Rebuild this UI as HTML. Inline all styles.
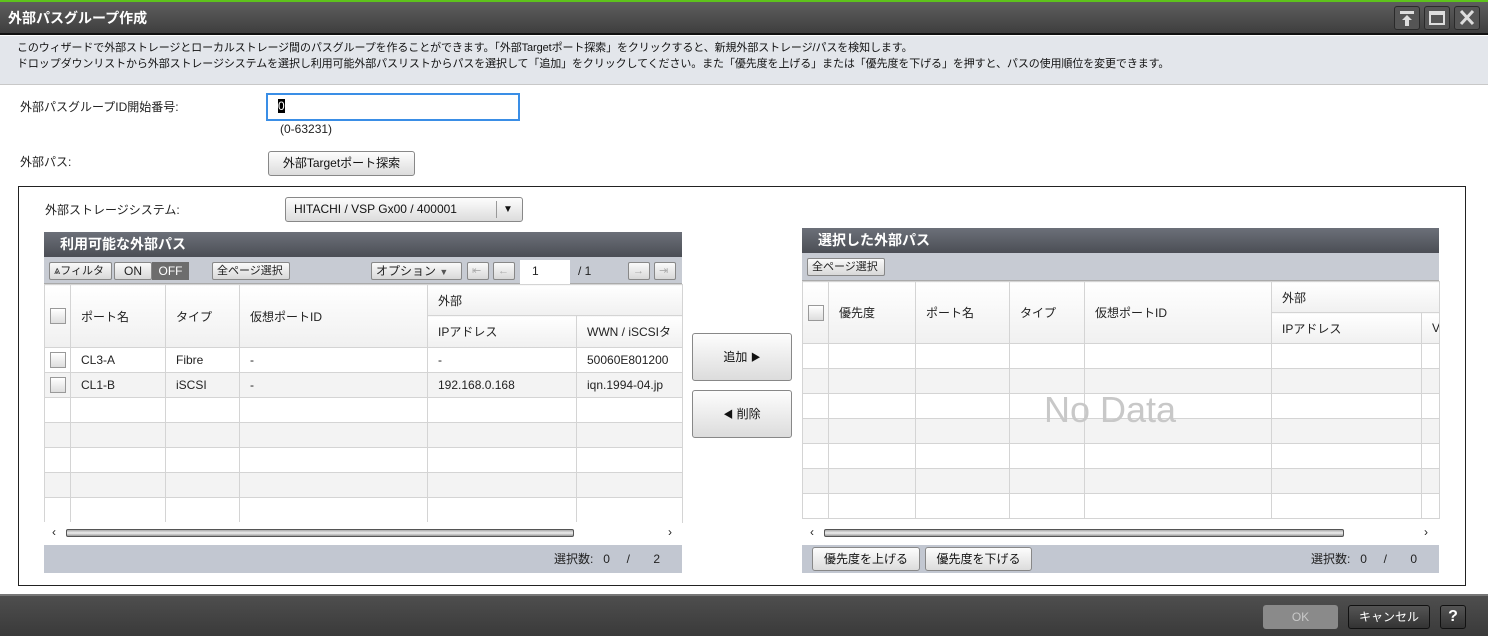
<!DOCTYPE html>
<html><head><meta charset="utf-8"><style>
*{box-sizing:border-box;margin:0;padding:0}
body{width:1488px;height:636px;overflow:hidden;background:#fff;font-family:"Liberation Sans","Noto Sans CJK JP",sans-serif;font-size:12px;color:#222;position:relative}
.a{position:absolute}
.btn{position:absolute;border:1px solid #888;border-radius:3px;background:linear-gradient(#fdfdfd,#dcdcdc);text-align:center;font-size:12px;color:#111}
.hdr{position:absolute;background:linear-gradient(#6c7079,#4b4e55);color:#fff;font-weight:bold;font-size:14px;padding-left:16px;line-height:24px}
.tb{position:absolute;background:#c7cbd3;border-bottom:1px solid #aaa}
.sb{position:absolute;border:1px solid #888;border-radius:2px;background:linear-gradient(#fafafa,#d8d8d8);font-size:11px;line-height:16px;padding:0 4px;height:18px}
table{border-collapse:collapse;table-layout:fixed;position:absolute;font-size:12px}
td{border:1px solid #d4d4d4;padding-left:10px;white-space:nowrap;overflow:hidden}
.th td{background:linear-gradient(#fff,#f0f0f0)}
tr.r td{height:25px}
tr.r:nth-child(even) td{background:#f3f3f3}
.cb{display:inline-block;width:16px;height:16px;border:1px solid #999;background:linear-gradient(#fff,#ddd);vertical-align:middle}
.foot{position:absolute;background:#c2c7d1;height:28px;line-height:28px;text-align:right;font-size:12px}
.scr{position:absolute;background:#fff;height:23px}
</style></head><body>
<div class="a" style="left:0;top:0;width:1488px;height:2px;background:#5ec31c"></div>
<div class="a" style="left:0;top:2px;width:1488px;height:33px;background:linear-gradient(#5e5e5e,#3e3e3e);border-bottom:2px solid #111"></div>
<div class="a" style="left:8px;top:8px;color:#fff;font-weight:bold;font-size:14px">外部パスグループ作成</div>
<div class="a" style="left:1394px;top:6px;width:26px;height:24px;border:1px solid #2a2a2a;border-radius:3px;background:#555"><svg width="24" height="22"><rect x="5" y="4" width="14" height="3" fill="#ddd"/><path d="M12 8 L7 13 H10 V19 H14 V13 H17Z" fill="#ddd"/></svg></div>
<div class="a" style="left:1424px;top:6px;width:26px;height:24px;border:1px solid #2a2a2a;border-radius:3px;background:#555"><svg width="24" height="22"><rect x="5" y="5" width="14" height="12" fill="none" stroke="#ddd" stroke-width="2"/><rect x="5" y="5" width="14" height="3" fill="#ddd"/></svg></div>
<div class="a" style="left:1454px;top:6px;width:26px;height:24px;border:1px solid #2a2a2a;border-radius:3px;background:#555"><svg width="24" height="22"><path d="M6 4 L18 17 M18 4 L6 17" stroke="#ddd" stroke-width="3"/></svg></div>
<div class="a" style="left:0;top:36px;width:1488px;height:49px;background:#e3e6eb;border-bottom:1px solid #c8c8c8"></div>
<div class="a" style="left:17px;top:40px;font-size:11px;line-height:16px;color:#111;letter-spacing:-0.1px">このウィザードで外部ストレージとローカルストレージ間のパスグループを作ることができます。「外部Targetポート探索」をクリックすると、新規外部ストレージ/パスを検知します。<br>ドロップダウンリストから外部ストレージシステムを選択し利用可能外部パスリストからパスを選択して「追加」をクリックしてください。また「優先度を上げる」または「優先度を下げる」を押すと、パスの使用順位を変更できます。</div>
<div class="a" style="left:20px;top:98px">外部パスグループID開始番号:</div>
<div class="a" style="left:266px;top:93px;width:254px;height:28px;border:2px solid #3a8ee6;background:#fff"><span style="position:absolute;left:10px;top:4px;background:#000;color:#fff;font-size:12px;line-height:14px">0</span></div>
<div class="a" style="left:280px;top:122px">(0-63231)</div>
<div class="a" style="left:20px;top:153px">外部パス:</div>
<div class="btn" style="left:268px;top:151px;width:147px;height:25px;line-height:23px">外部Targetポート探索</div>
<div class="a" style="left:18px;top:186px;width:1448px;height:400px;border:1px solid #222"></div>
<div class="a" style="left:45px;top:201px">外部ストレージシステム:</div>
<div class="btn" style="left:285px;top:197px;width:238px;height:25px;line-height:23px;text-align:left;padding-left:8px">HITACHI / VSP Gx00 / 400001<span style="position:absolute;left:210px;top:3px;height:17px;border-left:1px solid #999"></span><span style="position:absolute;left:217px;top:0;font-size:10px">▼</span></div>

<div class="hdr" style="left:44px;top:232px;width:638px;height:25px">利用可能な外部パス</div>
<div class="tb" style="left:44px;top:257px;width:638px;height:27px"></div>
<div class="sb" style="left:49px;top:262px;width:63px">⩓フィルタ</div>
<div class="sb" style="left:114px;top:262px;width:38px;text-align:center;font-size:12px">ON</div>
<div class="a" style="left:152px;top:262px;width:37px;height:18px;background:#6d6d6d;color:#fff;text-align:center;line-height:18px;font-size:12px">OFF</div>
<div class="sb" style="left:212px;top:262px;width:78px">全ページ選択</div>
<div class="sb" style="left:371px;top:262px;width:91px;font-size:12px">オプション <span style="font-size:9px;color:#555">▼</span></div>
<div class="sb" style="left:467px;top:262px;width:22px;color:#aaa">⇤</div>
<div class="sb" style="left:493px;top:262px;width:22px;color:#aaa">←</div>
<div class="a" style="left:520px;top:260px;width:50px;height:24px;background:#fff;padding:4px 0 0 12px">1</div>
<div class="a" style="left:578px;top:264px">/ 1</div>
<div class="sb" style="left:628px;top:262px;width:22px;color:#aaa">→</div>
<div class="sb" style="left:654px;top:262px;width:22px;color:#aaa">⇥</div>
<table style="left:44px;top:284px;width:638px">
<colgroup><col style="width:26px"><col style="width:95px"><col style="width:74px"><col style="width:188px"><col style="width:149px"><col style="width:106px"></colgroup>
<tr class="th"><td rowspan="2" style="padding-left:5px;height:63px"><span class="cb"></span></td><td rowspan="2">ポート名</td><td rowspan="2">タイプ</td><td rowspan="2">仮想ポートID</td><td colspan="2" style="height:31px">外部</td></tr>
<tr class="th"><td style="height:32px">IPアドレス</td><td>WWN / iSCSIタ</td></tr>
<tr class="r"><td style="padding-left:5px"><span class="cb"></span></td><td>CL3-A</td><td>Fibre</td><td>-</td><td>-</td><td>50060E801200</td></tr>
<tr class="r"><td style="padding-left:5px"><span class="cb"></span></td><td>CL1-B</td><td>iSCSI</td><td>-</td><td>192.168.0.168</td><td>iqn.1994-04.jp</td></tr>
<tr class="r"><td></td><td></td><td></td><td></td><td></td><td></td></tr>
<tr class="r"><td></td><td></td><td></td><td></td><td></td><td></td></tr>
<tr class="r"><td></td><td></td><td></td><td></td><td></td><td></td></tr>
<tr class="r"><td></td><td></td><td></td><td></td><td></td><td></td></tr>
<tr class="r"><td></td><td></td><td></td><td></td><td></td><td></td></tr>
</table>
<div class="scr" style="left:44px;top:522px;width:638px"><span class="a" style="left:8px;top:3px">‹</span><div class="a" style="left:22px;top:7px;width:508px;height:8px;border:1px solid #555;border-radius:2px;background:linear-gradient(#aaa,#eee,#999)"></div><span class="a" style="left:624px;top:3px">›</span></div>
<div class="foot" style="left:44px;top:545px;width:638px;padding-right:22px">選択数:&nbsp;&nbsp; 0 &nbsp;&nbsp;&nbsp; / &nbsp;&nbsp;&nbsp;&nbsp;&nbsp; 2</div>

<div class="btn" style="left:692px;top:333px;width:100px;height:48px;line-height:46px">追加 <span style="font-size:10px">▶</span></div>
<div class="btn" style="left:692px;top:390px;width:100px;height:48px;line-height:46px"><span style="font-size:10px">◀</span> 削除</div>

<div class="hdr" style="left:802px;top:228px;width:637px;height:25px">選択した外部パス</div>
<div class="tb" style="left:802px;top:253px;width:637px;height:28px"></div>
<div class="sb" style="left:807px;top:258px;width:78px">全ページ選択</div>
<table style="left:802px;top:281px;width:637px">
<colgroup><col style="width:26px"><col style="width:87px"><col style="width:94px"><col style="width:75px"><col style="width:187px"><col style="width:150px"><col style="width:18px"></colgroup>
<tr class="th"><td rowspan="2" style="padding-left:5px;height:62px"><span class="cb"></span></td><td rowspan="2">優先度</td><td rowspan="2">ポート名</td><td rowspan="2">タイプ</td><td rowspan="2">仮想ポートID</td><td colspan="2" style="height:31px">外部</td></tr>
<tr class="th"><td style="height:31px">IPアドレス</td><td>V</td></tr>
<tr class="r"><td></td><td></td><td></td><td></td><td></td><td></td><td></td></tr>
<tr class="r"><td></td><td></td><td></td><td></td><td></td><td></td><td></td></tr>
<tr class="r"><td></td><td></td><td></td><td></td><td></td><td></td><td></td></tr>
<tr class="r"><td></td><td></td><td></td><td></td><td></td><td></td><td></td></tr>
<tr class="r"><td></td><td></td><td></td><td></td><td></td><td></td><td></td></tr>
<tr class="r"><td></td><td></td><td></td><td></td><td></td><td></td><td></td></tr>
<tr class="r"><td style="height:4px"></td><td></td><td></td><td></td><td></td><td></td><td></td></tr>
</table>
<div class="a" style="left:1044px;top:389px;font-size:36px;color:#c8c8c8">No Data</div>
<div class="scr" style="left:802px;top:522px;width:637px"><span class="a" style="left:8px;top:3px">‹</span><div class="a" style="left:22px;top:7px;width:520px;height:8px;border:1px solid #555;border-radius:2px;background:linear-gradient(#aaa,#eee,#999)"></div><span class="a" style="left:622px;top:3px">›</span></div>
<div class="foot" style="left:802px;top:545px;width:637px;padding-right:22px">選択数:&nbsp;&nbsp; 0 &nbsp;&nbsp;&nbsp; / &nbsp;&nbsp;&nbsp;&nbsp;&nbsp; 0</div>
<div class="btn" style="left:812px;top:547px;width:108px;height:24px;line-height:22px">優先度を上げる</div>
<div class="btn" style="left:925px;top:547px;width:107px;height:24px;line-height:22px">優先度を下げる</div>

<div class="a" style="left:0;top:594px;width:1488px;height:42px;background:linear-gradient(#4e4e4e,#3a3a3a);border-top:2px solid #777"></div>
<div class="a" style="left:1263px;top:605px;width:75px;height:24px;border-radius:3px;background:#8a8a8a;color:#c8c8c8;text-align:center;line-height:24px">OK</div>
<div class="a" style="left:1348px;top:605px;width:82px;height:24px;border-radius:3px;border:1px solid #111;background:linear-gradient(#555,#333);color:#fff;text-align:center;line-height:22px">キャンセル</div>
<div class="a" style="left:1440px;top:605px;width:26px;height:24px;border-radius:3px;border:1px solid #111;background:linear-gradient(#555,#333);color:#fff;text-align:center;line-height:22px;font-weight:bold;font-size:16px">?</div>
</body></html>
